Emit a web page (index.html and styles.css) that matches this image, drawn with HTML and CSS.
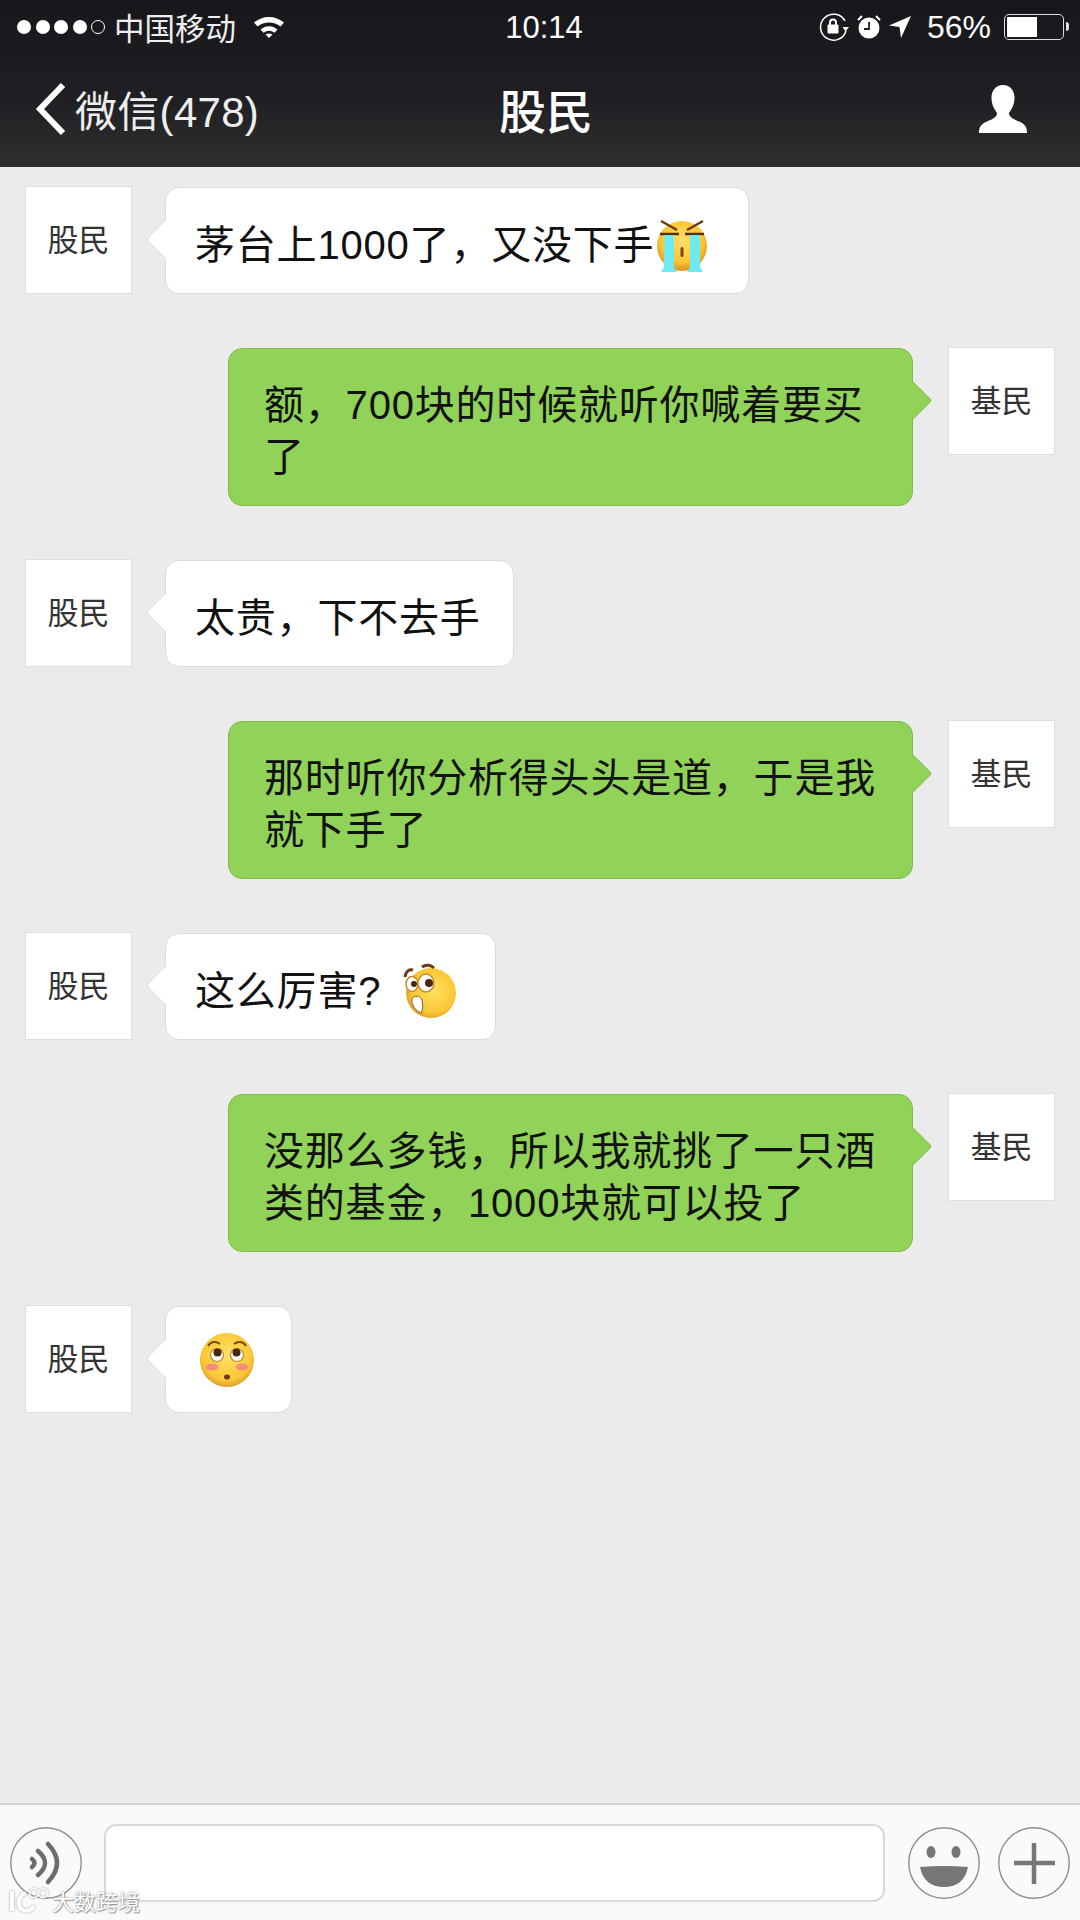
FILE: index.html
```html
<!DOCTYPE html>
<html lang="zh-CN">
  <head>
    <meta charset="UTF-8" />
    <title>股民</title>
    <link rel="stylesheet" href="styles.css">
  </head>
  <body>
    <header class="top">
      <div class="status">
        <div class="status-left">
          <span class="signal">
            <i></i><i></i><i></i><i></i><i class="off"></i>
          </span>
          <span class="carrier">中国移动</span>
          <svg class="wifi" viewBox="0 0 32 24" width="32" height="24">
            <path d="M1 8.5C9.5 1 22.5 1 31 8.5L27.5 12.5C21 7 11 7 4.500 12.500Z" fill="#fff"/>
            <path d="M7.500 15.500C12.500 11 19.500 11 24.500 15.500L21.500 18.800C18 16 14 16 10.500 18.800Z" fill="#fff"/>
            <path d="M12.500 20.500C14.500 19 17.500 19 19.500 20.500L16 24Z" fill="#fff"/>
          </svg>
        </div>
        <div class="time">10:14</div>
        <div class="status-right">
          <svg viewBox="0 0 30 30" width="30" height="30">
            <path d="M26 9A13 13 0 1 0 27 19" fill="none" stroke="#fff" stroke-width="1.500"/>
            <path d="M23.500 15L30 15L26.500 19.500Z" fill="#fff"/>
            <rect x="8.500" y="12.500" width="11" height="9" rx="1" fill="#fff"/>
            <path d="M11 13V10.500A3 3 0 0 1 17 10.500V13" fill="none" stroke="#fff" stroke-width="2"/>
          </svg>
          <svg viewBox="0 0 26 26" width="26" height="26">
            <circle cx="13" cy="14" r="10.500" fill="#fff"/>
            <path d="M13 8V15H8" fill="none" stroke="#222" stroke-width="1.800"/>
            <path d="M2 6L6 2M24 6L20 2" stroke="#fff" stroke-width="2"/>
          </svg>
          <svg viewBox="0 0 22 24" width="22" height="24">
            <path d="M22 1L12 23L10.500 12L0 10.500Z" fill="#fff"/>
          </svg>
          <span class="percent">56%</span>
          <span class="battery"><span class="battery-level"></span></span>
        </div>
      </div>
      <nav class="nav">
        <div class="nav-back">
          <svg viewBox="0 0 32 54" width="32" height="54">
            <path d="M28 3L5 27L28 51" fill="none" stroke="#fff" stroke-width="6"/>
          </svg>
          <span>微信(478)</span>
        </div>
        <div class="nav-title">股民</div>
        <div class="nav-user">
          <svg viewBox="0 0 48 48" width="48" height="48">
            <path d="M24 0C32 0 36 7 35.500 14C35 21 32 25 30 28C30 32 34 34 40 36.500C45 38.500 48 41 48 48H0C0 41 3 38.500 8 36.500C14 34 18 32 18 28C16 25 13 21 12.500 14C12 7 16 0 24 0Z" fill="#fff"/>
          </svg>
        </div>
      </nav>
    </header>

    <main class="chat">
      <div class="row">
        <div class="avatar">股民</div>
        <div class="bubble with-emoji">
          <span>茅台上1000了，又没下手</span>
          <svg class="emoji" viewBox="0 0 56 56" width="56" height="56">
            <defs>
              <radialGradient id="faceCry" cx="50%" cy="40%" r="60%">
                <stop offset="0" stop-color="#ffdf6a"/>
                <stop offset="0.7" stop-color="#fbc632"/>
                <stop offset="1" stop-color="#d9922a"/>
              </radialGradient>
            </defs>
            <circle cx="28" cy="29" r="25" fill="url(#faceCry)"/>
            <path d="M7 4L23 13M49 4L33 13" stroke="#6d3a14" stroke-width="2.500"/>
            <path d="M6 17H25M31 17H50" stroke="#5a2f10" stroke-width="2.500"/>
            <path d="M10 18H20V50L23 55H7L10 50Z" fill="#6fe9f2"/>
            <path d="M36 18H46V50L49 55H33L36 50Z" fill="#6fe9f2"/>
            <rect x="26.500" y="30" width="3" height="10" rx="1.500" fill="#7a4a12"/>
          </svg>
        </div>
      </div>

      <div class="row me">
        <div class="bubble">额，700块的时候就听你喊着要买了</div>
        <div class="avatar">基民</div>
      </div>

      <div class="row">
        <div class="avatar">股民</div>
        <div class="bubble">太贵，下不去手</div>
      </div>

      <div class="row me">
        <div class="bubble">那时听你分析得头头是道，于是我就下手了</div>
        <div class="avatar">基民</div>
      </div>

      <div class="row">
        <div class="avatar">股民</div>
        <div class="bubble with-emoji">
          <span>这么厉害?</span>
          <svg class="emoji emoji-gap" viewBox="0 0 56 56" width="56" height="56">
            <defs>
              <radialGradient id="faceWow" cx="55%" cy="45%" r="60%">
                <stop offset="0" stop-color="#ffe063"/>
                <stop offset="0.75" stop-color="#fbc633"/>
                <stop offset="1" stop-color="#d8922c"/>
              </radialGradient>
            </defs>
            <circle cx="30" cy="30" r="25" fill="url(#faceWow)"/>
            <path d="M4 14C5 8 8 6 12 7M21 4C25 1 30 2 33 5" fill="none" stroke="#6b3b16" stroke-width="3"/>
            <ellipse cx="11" cy="21" rx="6" ry="7.500" fill="#fff" stroke="#c98a2a" stroke-width="1.500"/>
            <ellipse cx="25" cy="20" rx="8" ry="9" fill="#fff" stroke="#c98a2a" stroke-width="1.500"/>
            <circle cx="13" cy="21" r="3" fill="#4a2510"/>
            <circle cx="28" cy="20" r="4" fill="#4a2510"/>
            <path d="M11 36C13 32 19 32 21 37C22 42 22 47 20 50C15 48 10 42 11 36Z" fill="#fff" stroke="#8a5a1a" stroke-width="1"/>
          </svg>
        </div>
      </div>

      <div class="row me">
        <div class="bubble">没那么多钱，所以我就挑了一只酒类的基金，1000块就可以投了</div>
        <div class="avatar">基民</div>
      </div>

      <div class="row">
        <div class="avatar">股民</div>
        <div class="bubble only-emoji">
          <svg class="emoji" viewBox="0 0 56 56" width="56" height="56">
            <defs>
              <radialGradient id="faceShy" cx="50%" cy="42%" r="60%">
                <stop offset="0" stop-color="#ffe066"/>
                <stop offset="0.75" stop-color="#fbc835"/>
                <stop offset="1" stop-color="#d8962e"/>
              </radialGradient>
            </defs>
            <circle cx="28" cy="28" r="27" fill="url(#faceShy)"/>
            <path d="M9 14C12 9 17 9 21 12M35 12C39 9 44 9 47 14" fill="none" stroke="#7a4a16" stroke-width="2"/>
            <circle cx="18" cy="23" r="6.500" fill="#fff" stroke="#b9862c" stroke-width="1.200"/>
            <circle cx="38" cy="23" r="6.500" fill="#fff" stroke="#b9862c" stroke-width="1.200"/>
            <circle cx="18.500" cy="20.500" r="4" fill="#4a2510"/>
            <circle cx="37.500" cy="20.500" r="4" fill="#4a2510"/>
            <ellipse cx="13" cy="35" rx="6.500" ry="3.500" fill="#f78d7c"/>
            <ellipse cx="43" cy="35" rx="6.500" ry="3.500" fill="#f78d7c"/>
            <ellipse cx="28" cy="45" rx="3" ry="2.500" fill="#6b3512"/>
          </svg>
        </div>
      </div>
    </main>

    <footer class="bar">
      <svg class="round-btn" viewBox="0 0 72 72" width="72" height="72">
        <circle cx="36" cy="36" r="35.200" fill="none" stroke="#8e8e8e" stroke-width="1.400"/>
        <g fill="none" stroke="#6c6c6c" stroke-width="4.500" stroke-linecap="round">
          <path d="M38 17Q56 36 38 55"/>
          <path d="M28 24Q42 36 28 48"/>
          <path d="M22 32Q27 36 22 40"/>
        </g>
      </svg>
      <div class="input"></div>
      <svg class="round-btn" viewBox="0 0 72 72" width="72" height="72">
        <circle cx="36" cy="36" r="35.200" fill="none" stroke="#8e8e8e" stroke-width="1.400"/>
        <ellipse cx="23" cy="25" rx="4.500" ry="6" fill="#767676"/>
        <ellipse cx="48" cy="25" rx="4.500" ry="6" fill="#767676"/>
        <path d="M12 40Q36 38 60 40Q56 60 36 60Q16 60 12 40Z" fill="#767676"/>
      </svg>
      <svg class="round-btn" viewBox="0 0 72 72" width="72" height="72">
        <circle cx="36" cy="36" r="35.200" fill="none" stroke="#8e8e8e" stroke-width="1.400"/>
        <path d="M36 16V57M16 36H57" stroke="#767676" stroke-width="4.500"/>
      </svg>
      <div class="watermark">
        <svg viewBox="0 0 40 26" width="40" height="26">
          <path d="M3 4V24M17 6C9 9 7 19 14 23C18 25 23 23 25 19" fill="none" stroke="#fff" stroke-width="4"/>
          <circle cx="25" cy="6" r="4.500" fill="none" stroke="#fff" stroke-width="1.500"/>
          <circle cx="34" cy="6" r="4.500" fill="none" stroke="#fff" stroke-width="1.500"/>
        </svg>
        <span>大数跨境</span>
      </div>
    </footer>
  </body>
</html>
```

FILE: styles.css
```css
* {
  box-sizing: border-box;
}
html,
body {
  margin: 0;
  height: 1920px;
}
body {
  position: relative;
  display: flex;
  flex-direction: column;
  background-color: #ebebeb;
  font-family: "Liberation Sans", "Noto Sans CJK SC", sans-serif;
  color: #111;
  overflow: hidden;
}

/* header */
.top {
  height: 167px;
  color: #fff;
  background: linear-gradient(#17171b 0%, #202024 60%, #2f2f31 100%);
}
.status {
  display: grid;
  grid-template-columns: 1fr auto 1fr;
  align-items: center;
  height: 54px;
  padding: 0 11px 0 17px;
}
.status-left,
.status-right {
  display: flex;
  align-items: center;
}
.status-right {
  justify-content: flex-end;
  gap: 7px;
}
.signal {
  display: flex;
  gap: 4.500px;
}
.signal i {
  width: 14px;
  height: 14px;
  border-radius: 50%;
  background: #fff;
}
.signal i.off {
  background: none;
  border: 1px solid #fff;
}
.carrier {
  margin-left: 9px;
  font-size: 30.500px;
  color: #eee;
}
.wifi {
  margin-left: 17px;
  margin-top: -3px;
}
.time {
  font-size: 31px;
  padding: 2px 0 0 2px;
}
.percent {
  margin: 0 6px 0 9px;
  font-size: 32px;
}
.battery {
  position: relative;
  display: block;
  width: 60px;
  height: 26px;
  border: 1.500px solid #ddd;
  border-radius: 5px;
  margin-right: 5px;
  padding: 2px;
}
.battery::after {
  content: "";
  position: absolute;
  right: -6px;
  top: 7px;
  width: 3px;
  height: 9px;
  border-radius: 0 3px 3px 0;
  background: #ddd;
}
.battery-level {
  display: block;
  width: 56%;
  height: 100%;
  background: #fff;
}
.nav {
  display: grid;
  grid-template-columns: 1fr auto 1fr;
  align-items: center;
  height: 113px;
  padding: 0 35px 4px;
}
.nav-back {
  display: flex;
  align-items: center;
  gap: 8px;
  font-size: 42px;
  letter-spacing: 0.300px;
  color: #eee;
}
.nav-title {
  font-size: 47px;
  font-weight: 500;
  padding-left: 12px;
}
.nav-user {
  display: flex;
  justify-content: flex-end;
  padding-right: 18px;
}

/* messages */
.chat {
  flex: 1;
  display: flex;
  flex-direction: column;
  gap: 53px;
  padding: 19px 25px 0 25px;
}
.row {
  display: flex;
  gap: 33px;
  align-items: flex-start;
}
.row.me {
  justify-content: flex-end;
  gap: 35px;
}
.avatar {
  flex: none;
  width: 107px;
  height: 108px;
  display: flex;
  align-items: center;
  justify-content: center;
  padding-bottom: 5px;
  background: #fff;
  border: 1px solid #dedede;
  font-size: 31px;
  color: #333;
}
.bubble {
  position: relative;
  display: flex;
  align-items: center;
  min-height: 107px;
  margin-top: 1px;
  padding: 30px 32px 22px 29px;
  background: #fff;
  border: 1px solid #dcdcdc;
  border-radius: 14px;
  font-size: 40px;
  line-height: 52px;
  letter-spacing: 0.800px;
}
.with-emoji {
  padding-right: 38px;
}
.only-emoji {
  padding: 26px 36px 26px 33px;
}
.bubble::before {
  content: "";
  position: absolute;
  left: -15px;
  top: 38px;
  width: 26px;
  height: 26px;
  background: #fff;
  border-left: 1px solid #dcdcdc;
  border-bottom: 1px solid #dcdcdc;
  border-radius: 0 0 0 4px;
  transform: rotate(45deg);
}
.me .bubble {
  display: block;
  width: 685px;
  padding: 30px 30px 22px 35px;
  background: #91d258;
  border-color: #7fbb4c;
}
.me .bubble::before {
  left: auto;
  right: -15px;
  background: #91d258;
  border: 0;
  border-top: 1px solid #7fbb4c;
  border-right: 1px solid #7fbb4c;
  border-radius: 0 4px 0 0;
}
.emoji {
  flex: none;
  margin: -3px 0;
}
.emoji-gap {
  margin-left: 20px;
}

/* input bar */
.bar {
  height: 117px;
  display: flex;
  align-items: center;
  gap: 22px;
  padding: 0 10px 0 10px;
  background: #fafafa;
  border-top: 2px solid #d2d2d2;
}
.round-btn {
  flex: none;
}
.input {
  flex: 1;
  height: 78px;
  margin-right: 1px;
  background: #fff;
  border: 2px solid #d9d9d9;
  border-radius: 12px;
}
.bar .round-btn:last-of-type {
  margin-left: -4px;
}
.watermark {
  position: absolute;
  left: 9px;
  bottom: 4px;
  display: flex;
  align-items: center;
  gap: 3px;
  font-size: 22px;
  color: #fff;
  text-shadow: 0 0 2px #888, 1px 1px 1px #999;
}
.watermark svg {
  filter: drop-shadow(0 0 1px #999);
}
```
